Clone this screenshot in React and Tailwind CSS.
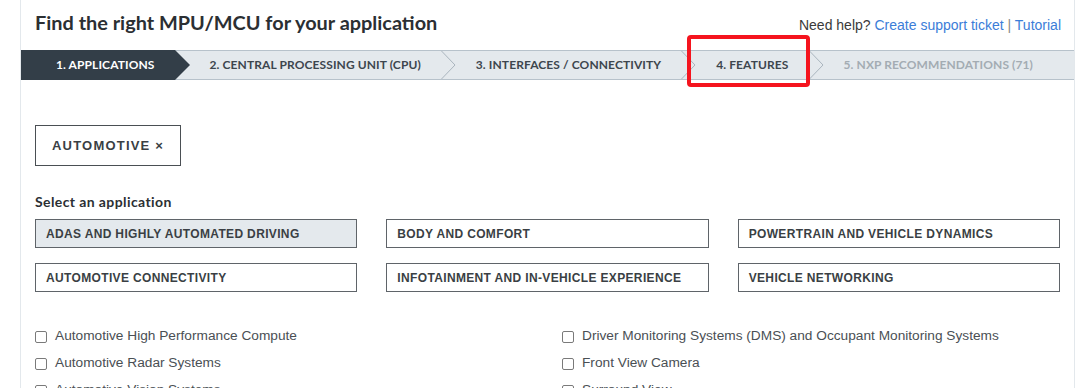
import React from "react";

const nunito = { fontFamily: "Lato, 'Open Sans', sans-serif" };

function Chevron() {
  return (
    <svg width="15" height="30" viewBox="0 0 15 30" className="shrink-0 block">
      <polyline points="0.5,1 14,15 0.5,29" fill="none" stroke="#aab5be" strokeWidth="1" />
    </svg>
  );
}

function Step({ children, light }) {
  return (
    <div
      className={`px-[20px] h-full flex items-center text-[12px] font-bold tracking-[0.1px] whitespace-nowrap ${
        light ? "text-[#a3acb3]" : "text-[#3d464e]"
      }`}
    >
      {children}
    </div>
  );
}

function AppButton({ children, active }) {
  return (
    <div
      className={`h-[29px] border border-[#5f6469] flex items-center px-[10px] text-[12px] font-bold tracking-[0.35px] text-[#3a3f44] ${
        active ? "bg-[#e4e9ed]" : "bg-white"
      }`}
      style={{ fontFamily: "'Liberation Sans', Arial, sans-serif" }}
    >
      {children}
    </div>
  );
}

function Check({ children }) {
  return (
    <div className="h-[27px] flex items-center gap-[8px]">
      <span className="w-[12px] h-[12px] rounded-[2px] border border-[#7a7a7a] bg-white shrink-0" />
      <span className="text-[13.7px] text-[#4a4f54] whitespace-nowrap" style={{ fontFamily: "'Liberation Sans', Arial, sans-serif" }}>
        {children}
      </span>
    </div>
  );
}

export default function App() {
  return (
    <div className="w-[1080px] h-[388px] bg-white overflow-hidden">
      <div className="ml-[20px] w-[1055px] h-full border-x border-[#e3e8ec] relative">
        {/* Header */}
        <div className="h-[50px] flex items-center justify-between pl-[14px] pr-[13px] pb-[4px]">
          <h1 className="text-[19.9px] font-bold text-[#2b2f33]" style={nunito}>
            Find the right MPU/MCU for your application
          </h1>
          <div className="text-[14px] pt-[4px] text-[#3a3a3a]" style={{ fontFamily: "'Liberation Sans', Arial, sans-serif" }}>
            Need help? <span className="text-[#3b7dd8]">Create support ticket</span>
            <span className="text-[#888]"> | </span>
            <span className="text-[#3b7dd8]">Tutorial</span>
          </div>
        </div>

        {/* Steps bar */}
        <div
          className="h-[30px] flex items-stretch bg-[#e4e9ed] shadow-[inset_0_1px_0_#b7c2cb,inset_0_-1px_0_#b7c2cb]"
          style={nunito}
        >
          <div className="h-full flex items-center bg-[#333e48] pl-[35px] pr-[20px] text-[12px] font-bold text-white tracking-[0.1px] whitespace-nowrap">
            1. APPLICATIONS
          </div>
          <svg width="15" height="30" viewBox="0 0 15 30" className="shrink-0 block">
            <polygon points="0,0 15,15 0,30" fill="#333e48" />
          </svg>
          <Step>2. CENTRAL PROCESSING UNIT (CPU)</Step>
          <Chevron />
          <Step>3. INTERFACES / CONNECTIVITY</Step>
          <Chevron />
          <div className="relative h-full flex">
            <Step>4. FEATURES</Step>
            <div className="absolute left-[-9px] right-[-1px] top-[-15px] bottom-[-7px] border-[4px] border-[#f5141e] rounded-[4px]" />
          </div>
          <Chevron />
          <Step light>5. NXP RECOMMENDATIONS (71)</Step>
        </div>

        {/* Body */}
        <div className="px-[14px]">
          <div className="mt-[45px] inline-flex items-center h-[41px] px-[16px] border border-[#4a4f54]">
            <span
              className="text-[13px] font-bold tracking-[1.2px] text-[#3a3f44]"
              style={{ fontFamily: "'Liberation Sans', Arial, sans-serif" }}
            >
              AUTOMOTIVE ×
            </span>
          </div>

          <div className="mt-[27px] text-[14px] leading-[18px] font-bold tracking-[0.4px] text-[#2b2f33]" style={nunito}>
            Select an application
          </div>

          <div className="mt-[8px] grid grid-cols-3 gap-x-[29px] gap-y-[15px] w-[1025px]">
            <AppButton active>ADAS AND HIGHLY AUTOMATED DRIVING</AppButton>
            <AppButton>BODY AND COMFORT</AppButton>
            <AppButton>POWERTRAIN AND VEHICLE DYNAMICS</AppButton>
            <AppButton>AUTOMOTIVE CONNECTIVITY</AppButton>
            <AppButton>INFOTAINMENT AND IN-VEHICLE EXPERIENCE</AppButton>
            <AppButton>VEHICLE NETWORKING</AppButton>
          </div>

          <div className="mt-[31px] grid grid-cols-2 gap-x-[29px] w-[1025px]">
            <div>
              <Check>Automotive High Performance Compute</Check>
              <Check>Automotive Radar Systems</Check>
              <Check>Automotive Vision Systems</Check>
            </div>
            <div>
              <Check>Driver Monitoring Systems (DMS) and Occupant Monitoring Systems</Check>
              <Check>Front View Camera</Check>
              <Check>Surround View</Check>
            </div>
          </div>
        </div>
      </div>
    </div>
  );
}
